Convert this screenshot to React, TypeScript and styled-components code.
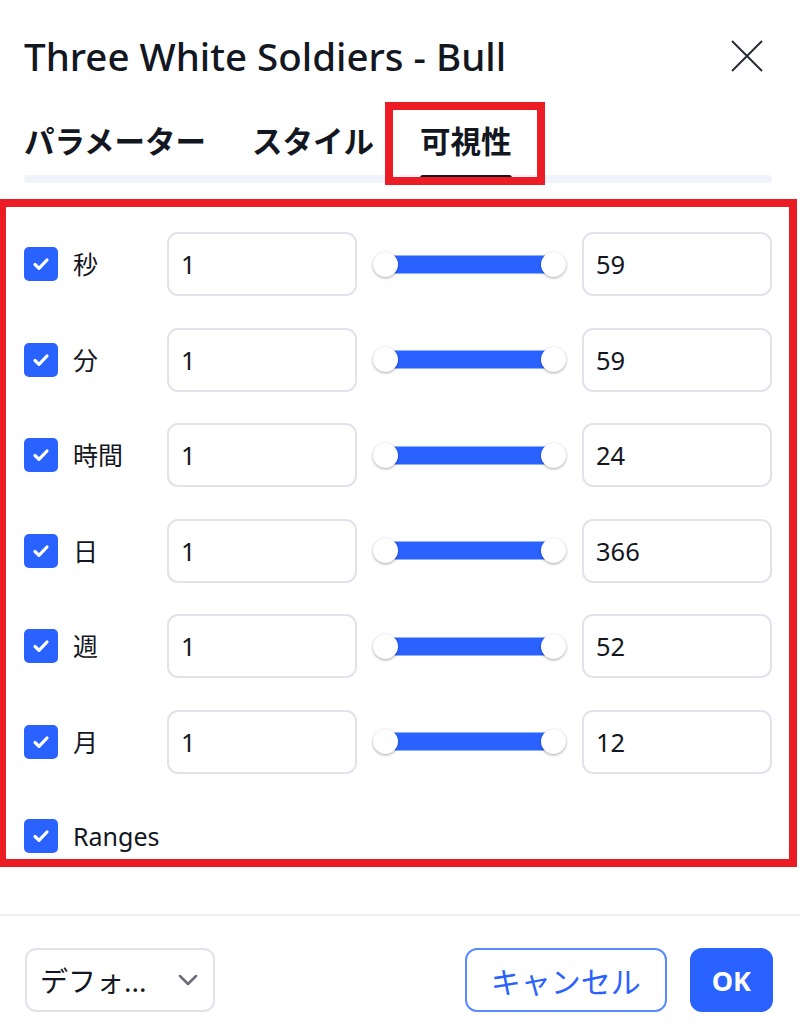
import React from "react";
import styled, { createGlobalStyle } from "styled-components";

const GlobalStyle = createGlobalStyle`
  html, body {
    margin: 0;
    padding: 0;
    background: #ffffff;
  }
  * {
    box-sizing: border-box;
  }
`;

const FONT = `"Noto Sans", "Noto Sans CJK JP", sans-serif`;
const BLUE = "#2962ff";
const INK = "#131722";
const RED = "#ec1c24";

const Dialog = styled.div`
  width: 800px;
  height: 1034px;
  background: #fff;
  font-family: ${FONT};
  color: ${INK};
  display: flex;
  flex-direction: column;
  overflow: hidden;
`;

const Header = styled.div`
  height: 112px;
  padding: 0 36px 0 24px;
  display: flex;
  align-items: center;
  justify-content: space-between;
`;

const Title = styled.div`
  font-size: 38.5px;
  font-weight: 500;
  line-height: 1;
`;

const CloseButton = styled.div`
  width: 34px;
  height: 34px;
  display: flex;
  align-items: center;
  justify-content: center;
  color: #2a2e39;
`;

const TabBar = styled.div`
  position: relative;
  margin: 0 28px 0 24px;
  padding-bottom: 8px;
  display: flex;
  gap: 46px;

  &::after {
    content: "";
    position: absolute;
    left: 0;
    right: 0;
    bottom: 0;
    height: 8px;
    border-radius: 4px;
    background: #f0f3fa;
  }
`;

const Tab = styled.div<{ $active?: boolean }>`
  position: relative;
  padding: 14px 0 19px;
  font-size: 30.5px;
  font-weight: 700;
  line-height: 1;
  color: ${INK};

  ${(p) =>
    p.$active &&
    `
    &::after {
      content: "";
      position: absolute;
      left: 0;
      right: 0;
      bottom: -6px;
      height: 6px;
      background: ${INK};
      border-radius: 3px 3px 0 0;
      z-index: 1;
    }
  `}
`;

const Highlight = styled.div`
  position: absolute;
  left: -35px;
  right: -33px;
  top: -10px;
  bottom: -10px;
  border: 8px solid ${RED};
  z-index: 2;
`;

const Section = styled.div`
  margin-top: 16px;
  width: 797px;
  border: solid ${RED};
  border-width: 8px 8px 8px 6px;
  padding: 25px 0 6px 18px;
  display: flex;
  flex-direction: column;
  gap: 31.5px;
`;

const Row = styled.div<{ $tall?: boolean }>`
  display: flex;
  align-items: ${(p) => (p.$tall ? "flex-end" : "center")};
  height: ${(p) => (p.$tall ? "48px" : "64px")};
`;

const Check = styled.div`
  width: 34px;
  height: 34px;
  border-radius: 5px;
  background: ${BLUE};
  display: flex;
  align-items: center;
  justify-content: center;
  flex-shrink: 0;
`;

const Label = styled.div<{ $wide?: boolean }>`
  width: ${(p) => (p.$wide ? "auto" : "78px")};
  margin: 0 16px 0 15px;
  font-size: 25px;
  line-height: 34px;
  color: ${INK};
`;

const Field = styled.div<{ $w: number }>`
  width: ${(p) => p.$w}px;
  height: 64px;
  border: 2px solid #e0e3eb;
  border-radius: 11px;
  padding-left: 12px;
  display: flex;
  align-items: center;
  font-size: 25.5px;
  color: ${INK};
  flex-shrink: 0;
`;

const Slider = styled.div`
  width: 193px;
  margin: 0 16px;
  display: flex;
  align-items: center;
`;

const Knob = styled.div`
  position: relative;
  z-index: 1;
  width: 25px;
  height: 25px;
  border-radius: 50%;
  background: #fff;
  box-shadow: 0 1px 3px rgba(0, 0, 0, 0.35);
  flex-shrink: 0;
`;

const Bar = styled.div`
  flex: 1;
  height: 19px;
  margin: 0 -12px;
  background: ${BLUE};
  border-top: 1px solid #8fb0ff;
  border-bottom: 1px solid #8fb0ff;
`;

const Divider = styled.div`
  margin-top: 47px;
  height: 2px;
  background: #eef0f4;
`;

const Footer = styled.div`
  padding: 32px 27px 22px 25px;
  display: flex;
  align-items: center;
`;

const Select = styled.div`
  width: 190px;
  height: 64px;
  border: 2px solid #e0e3eb;
  border-radius: 11px;
  padding: 0 14px 0 13px;
  display: flex;
  align-items: center;
  justify-content: space-between;
  font-size: 28px;
  color: ${INK};
`;

const Spacer = styled.div`
  flex: 1;
`;

const Button = styled.div<{ $primary?: boolean }>`
  height: 64px;
  padding: ${(p) => (p.$primary ? "0 20px" : "0 24px")};
  border-radius: 12px;
  border: 2px solid ${(p) => (p.$primary ? BLUE : "#5b8aff")};
  background: ${(p) => (p.$primary ? BLUE : "#fff")};
  color: ${(p) => (p.$primary ? "#fff" : BLUE)};
  font-size: ${(p) => (p.$primary ? "27px" : "30px")};
  font-weight: ${(p) => (p.$primary ? 700 : 400)};
  display: flex;
  align-items: center;
  justify-content: center;
  & + & {
    margin-left: 23px;
  }
`;

const CheckMark = () => (
  <svg width="22" height="22" viewBox="0 0 22 22">
    <path
      d="M5 11.5l4 3.8L17 7"
      fill="none"
      stroke="#fff"
      strokeWidth="3.2"
      strokeLinecap="round"
      strokeLinejoin="round"
    />
  </svg>
);

const rows = [
  { label: "秒", max: 59 },
  { label: "分", max: 59 },
  { label: "時間", max: 24 },
  { label: "日", max: 366 },
  { label: "週", max: 52 },
  { label: "月", max: 12 },
];

export default function App() {
  return (
    <>
      <GlobalStyle />
      <Dialog>
        <Header>
          <Title>Three White Soldiers - Bull</Title>
          <CloseButton>
            <svg width="34" height="34" viewBox="0 0 34 34">
              <path d="M2 2l30 30M32 2L2 32" stroke="currentColor" strokeWidth="2" fill="none" />
            </svg>
          </CloseButton>
        </Header>

        <TabBar>
          <Tab>パラメーター</Tab>
          <Tab>スタイル</Tab>
          <Tab $active>
            可視性
            <Highlight />
          </Tab>
        </TabBar>

        <Section>
          {rows.map((r) => (
            <Row key={r.label}>
              <Check>
                <CheckMark />
              </Check>
              <Label>{r.label}</Label>
              <Field $w={190}>1</Field>
              <Slider>
                <Knob />
                <Bar />
                <Knob />
              </Slider>
              <Field $w={190}>{r.max}</Field>
            </Row>
          ))}
          <Row $tall>
            <Check>
              <CheckMark />
            </Check>
            <Label $wide>Ranges</Label>
          </Row>
        </Section>

        <Divider />

        <Footer>
          <Select>
            <span>デフォ...</span>
            <svg width="22" height="14" viewBox="0 0 22 14">
              <path d="M3 3l8 8 8-8" fill="none" stroke="#6a6d78" strokeWidth="2.5" strokeLinecap="round" strokeLinejoin="round" />
            </svg>
          </Select>
          <Spacer />
          <Button>キャンセル</Button>
          <Button $primary>OK</Button>
        </Footer>
      </Dialog>
    </>
  );
}
